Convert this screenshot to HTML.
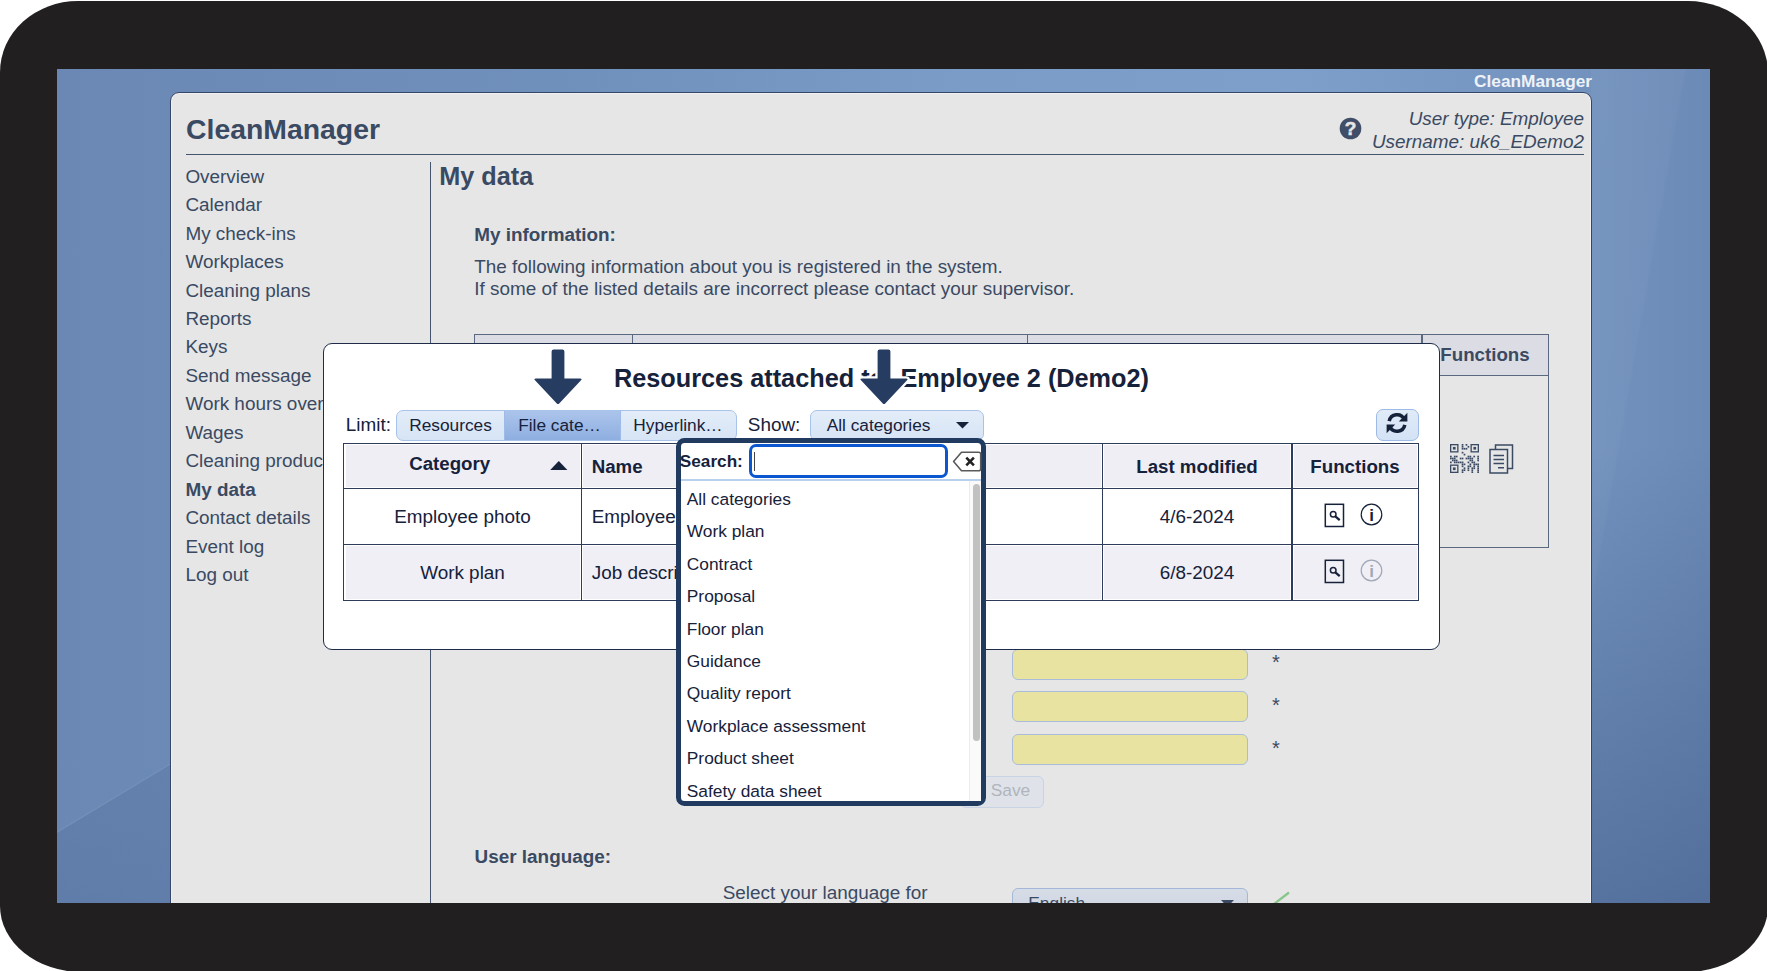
<!DOCTYPE html>
<html><head><meta charset="utf-8"><title>CleanManager</title>
<style>
*{box-sizing:border-box;margin:0;padding:0}
html,body{width:1767px;height:971px;overflow:hidden;background:#fff}
body{font-family:"Liberation Sans",Arial,sans-serif;color:#3a4a63;position:relative}
.abs{position:absolute}
#frame{position:absolute;left:0;top:1px;width:1767.5px;height:970.6px;background:#221f20;border-radius:78px 80px 82px 82px / 71px 72px 66px 66px}
#screen{position:absolute;left:57px;top:69px;width:1653px;height:834px;overflow:hidden;
 background:linear-gradient(90deg,#6b88b4 0%,#7090bc 30%,#7a9cc6 55%,#7d9fca 75%,#7393be 92%,#6c8ab6 100%)}
#wl{position:absolute;left:0;top:620px;width:130px;height:214px;background:linear-gradient(180deg,rgba(60,85,135,.13),rgba(55,80,130,.21));clip-path:polygon(0 143.5px,114px 75px,130px 75px,130px 214px,0 214px)}
#wl2{position:absolute;left:0;top:620px;width:130px;height:214px;background:rgba(255,255,255,.07);clip-path:polygon(0 142.5px,114px 74px,114px 75.3px,0 144.3px)}
#wr{position:absolute;left:1534px;top:0;width:119px;height:834px;background:linear-gradient(180deg,rgba(60,85,135,0) 0%,rgba(60,85,135,0) 45%,rgba(45,68,115,.40) 100%)}
#wr2{position:absolute;left:1534px;top:0;width:119px;height:834px;background:linear-gradient(100deg,rgba(255,255,255,.035) 0%,rgba(255,255,255,.025) 35%,rgba(255,255,255,0) 36%)}
#page{position:absolute;left:-57px;top:-69px;width:1767px;height:971px}
.t{position:absolute;white-space:nowrap;line-height:1}
</style></head><body>
<div id="frame"></div>
<div id="screen"><div id="wl"></div><div id="wl2"></div><div id="wr"></div><div id="wr2"></div><div id="page">
<div class="abs" style="left:169.6px;top:91.5px;width:1422px;height:900px;background:#e6e6e6;border:1.3px solid #34476a;border-radius:9px 9px 0 0;box-shadow:inset 0 0 0 1px rgba(255,255,255,.45)"></div>
<div class="t" style="top:73.09px;font-size:17.26px;right:175px;color:#eef2f8;font-weight:bold">CleanManager</div>
<div class="t" style="top:115.38px;font-size:28.38px;left:186px;font-weight:bold">CleanManager</div>
<div class="abs" style="left:185.6px;top:154px;width:1398.4px;height:1.4px;background:#44546f"></div>
<div class="t" style="top:110.20px;font-size:18.9px;right:183px;font-style:italic">User type: Employee</div>
<div class="t" style="top:132.80px;font-size:18.9px;right:183px;font-style:italic">Username: uk6_EDemo2</div>
<svg class="abs" style="left:1338.6px;top:117.2px" width="23" height="23" viewBox="0 0 23 23"><circle cx="11.5" cy="11.5" r="10.8" fill="#404e67"/><text x="11.5" y="18.4" text-anchor="middle" font-family="Liberation Sans" font-weight="bold" font-size="19" fill="#e6e6e6" stroke="#e6e6e6" stroke-width="0.5">?</text></svg>
<div class="t" style="top:167.70px;font-size:18.9px;left:185.4px;">Overview</div>
<div class="t" style="top:196.16px;font-size:18.9px;left:185.4px;">Calendar</div>
<div class="t" style="top:224.62px;font-size:18.9px;left:185.4px;">My check-ins</div>
<div class="t" style="top:253.08px;font-size:18.9px;left:185.4px;">Workplaces</div>
<div class="t" style="top:281.54px;font-size:18.9px;left:185.4px;">Cleaning plans</div>
<div class="t" style="top:310.00px;font-size:18.9px;left:185.4px;">Reports</div>
<div class="t" style="top:338.46px;font-size:18.9px;left:185.4px;">Keys</div>
<div class="t" style="top:366.92px;font-size:18.9px;left:185.4px;">Send message</div>
<div class="t" style="top:395.38px;font-size:18.9px;left:185.4px;">Work hours overview</div>
<div class="t" style="top:423.84px;font-size:18.9px;left:185.4px;">Wages</div>
<div class="t" style="top:452.30px;font-size:18.9px;left:185.4px;">Cleaning products</div>
<div class="t" style="top:480.76px;font-size:18.9px;left:185.4px;font-weight:bold">My data</div>
<div class="t" style="top:509.22px;font-size:18.9px;left:185.4px;">Contact details</div>
<div class="t" style="top:537.68px;font-size:18.9px;left:185.4px;">Event log</div>
<div class="t" style="top:566.14px;font-size:18.9px;left:185.4px;">Log out</div>
<div class="abs" style="left:429.8px;top:162px;width:1.4px;height:760px;background:#44546f"></div>
<div class="t" style="top:163.63px;font-size:25.25px;left:439.2px;font-weight:bold">My data</div>
<div class="t" style="top:226.30px;font-size:18.9px;left:474.2px;font-weight:bold">My information:</div>
<div class="t" style="top:258.08px;font-size:18.92px;left:474.2px;">The following information about you is registered in the system.</div>
<div class="t" style="top:279.68px;font-size:18.92px;left:474.2px;">If some of the listed details are incorrect please contact your supervisor.</div>
<div class="abs" style="left:473.5px;top:333.5px;width:1075.5px;height:214px;border:1.3px solid #5a6880;background:#e6e6e6"></div>
<div class="abs" style="left:474.5px;top:334.5px;width:1073.5px;height:40.5px;background:#dcdce4"></div>
<div class="abs" style="left:474px;top:374.7px;width:1074px;height:1.3px;background:#5a6880"></div>
<div class="abs" style="left:631.5px;top:334px;width:1.3px;height:41px;background:#5a6880"></div>
<div class="abs" style="left:1026.8px;top:334px;width:1.3px;height:41px;background:#5a6880"></div>
<div class="abs" style="left:1421.3px;top:334px;width:1.3px;height:41px;background:#5a6880"></div>
<div class="abs" style="left:1421.3px;top:375px;width:1.3px;height:172px;background:#5a6880"></div>
<div class="t" style="top:345.77px;font-size:18.7px;left:1085px;width:800px;text-align:center;font-weight:bold">Functions</div>
<svg class="abs" style="left:1449.5px;top:444.3px" width="29.5" height="29" viewBox="0 0 29.5 29"><rect x="0.65" y="0.65" width="7.2" height="7.2" fill="none" stroke="#3a4a63" stroke-width="1.3"/><rect x="2.9" y="2.9" width="2.7" height="2.7" fill="#3a4a63"/><rect x="21.15" y="0.65" width="7.2" height="7.2" fill="none" stroke="#3a4a63" stroke-width="1.3"/><rect x="23.4" y="2.9" width="2.7" height="2.7" fill="#3a4a63"/><rect x="0.65" y="21.15" width="7.2" height="7.2" fill="none" stroke="#3a4a63" stroke-width="1.3"/><rect x="2.9" y="23.4" width="2.7" height="2.7" fill="#3a4a63"/><rect x="0.00" y="11.70" width="1.7" height="1.7" fill="#3a4a63"/><rect x="0.00" y="13.65" width="1.7" height="1.7" fill="#3a4a63"/><rect x="0.00" y="17.55" width="1.7" height="1.7" fill="#3a4a63"/><rect x="1.95" y="13.65" width="1.7" height="1.7" fill="#3a4a63"/><rect x="1.95" y="15.60" width="1.7" height="1.7" fill="#3a4a63"/><rect x="3.90" y="11.70" width="1.7" height="1.7" fill="#3a4a63"/><rect x="3.90" y="13.65" width="1.7" height="1.7" fill="#3a4a63"/><rect x="3.90" y="15.60" width="1.7" height="1.7" fill="#3a4a63"/><rect x="3.90" y="17.55" width="1.7" height="1.7" fill="#3a4a63"/><rect x="5.85" y="11.70" width="1.7" height="1.7" fill="#3a4a63"/><rect x="5.85" y="15.60" width="1.7" height="1.7" fill="#3a4a63"/><rect x="5.85" y="17.55" width="1.7" height="1.7" fill="#3a4a63"/><rect x="7.80" y="17.55" width="1.7" height="1.7" fill="#3a4a63"/><rect x="9.75" y="13.65" width="1.7" height="1.7" fill="#3a4a63"/><rect x="9.75" y="17.55" width="1.7" height="1.7" fill="#3a4a63"/><rect x="11.70" y="0.00" width="1.7" height="1.7" fill="#3a4a63"/><rect x="11.70" y="1.95" width="1.7" height="1.7" fill="#3a4a63"/><rect x="11.70" y="3.90" width="1.7" height="1.7" fill="#3a4a63"/><rect x="11.70" y="7.80" width="1.7" height="1.7" fill="#3a4a63"/><rect x="11.70" y="13.65" width="1.7" height="1.7" fill="#3a4a63"/><rect x="11.70" y="17.55" width="1.7" height="1.7" fill="#3a4a63"/><rect x="11.70" y="19.50" width="1.7" height="1.7" fill="#3a4a63"/><rect x="11.70" y="21.45" width="1.7" height="1.7" fill="#3a4a63"/><rect x="11.70" y="25.35" width="1.7" height="1.7" fill="#3a4a63"/><rect x="11.70" y="27.30" width="1.7" height="1.7" fill="#3a4a63"/><rect x="13.65" y="3.90" width="1.7" height="1.7" fill="#3a4a63"/><rect x="13.65" y="9.75" width="1.7" height="1.7" fill="#3a4a63"/><rect x="13.65" y="19.50" width="1.7" height="1.7" fill="#3a4a63"/><rect x="13.65" y="23.40" width="1.7" height="1.7" fill="#3a4a63"/><rect x="13.65" y="25.35" width="1.7" height="1.7" fill="#3a4a63"/><rect x="15.60" y="0.00" width="1.7" height="1.7" fill="#3a4a63"/><rect x="15.60" y="3.90" width="1.7" height="1.7" fill="#3a4a63"/><rect x="15.60" y="13.65" width="1.7" height="1.7" fill="#3a4a63"/><rect x="17.55" y="1.95" width="1.7" height="1.7" fill="#3a4a63"/><rect x="17.55" y="11.70" width="1.7" height="1.7" fill="#3a4a63"/><rect x="17.55" y="13.65" width="1.7" height="1.7" fill="#3a4a63"/><rect x="17.55" y="17.55" width="1.7" height="1.7" fill="#3a4a63"/><rect x="17.55" y="21.45" width="1.7" height="1.7" fill="#3a4a63"/><rect x="17.55" y="23.40" width="1.7" height="1.7" fill="#3a4a63"/><rect x="17.55" y="25.35" width="1.7" height="1.7" fill="#3a4a63"/><rect x="19.50" y="11.70" width="1.7" height="1.7" fill="#3a4a63"/><rect x="19.50" y="13.65" width="1.7" height="1.7" fill="#3a4a63"/><rect x="19.50" y="15.60" width="1.7" height="1.7" fill="#3a4a63"/><rect x="19.50" y="19.50" width="1.7" height="1.7" fill="#3a4a63"/><rect x="19.50" y="21.45" width="1.7" height="1.7" fill="#3a4a63"/><rect x="21.45" y="13.65" width="1.7" height="1.7" fill="#3a4a63"/><rect x="21.45" y="15.60" width="1.7" height="1.7" fill="#3a4a63"/><rect x="21.45" y="17.55" width="1.7" height="1.7" fill="#3a4a63"/><rect x="21.45" y="23.40" width="1.7" height="1.7" fill="#3a4a63"/><rect x="21.45" y="25.35" width="1.7" height="1.7" fill="#3a4a63"/><rect x="21.45" y="27.30" width="1.7" height="1.7" fill="#3a4a63"/><rect x="23.40" y="11.70" width="1.7" height="1.7" fill="#3a4a63"/><rect x="23.40" y="17.55" width="1.7" height="1.7" fill="#3a4a63"/><rect x="23.40" y="19.50" width="1.7" height="1.7" fill="#3a4a63"/><rect x="23.40" y="21.45" width="1.7" height="1.7" fill="#3a4a63"/><rect x="23.40" y="23.40" width="1.7" height="1.7" fill="#3a4a63"/><rect x="25.35" y="19.50" width="1.7" height="1.7" fill="#3a4a63"/><rect x="27.30" y="11.70" width="1.7" height="1.7" fill="#3a4a63"/><rect x="27.30" y="13.65" width="1.7" height="1.7" fill="#3a4a63"/><rect x="27.30" y="15.60" width="1.7" height="1.7" fill="#3a4a63"/><rect x="27.30" y="19.50" width="1.7" height="1.7" fill="#3a4a63"/><rect x="27.30" y="21.45" width="1.7" height="1.7" fill="#3a4a63"/><rect x="27.30" y="23.40" width="1.7" height="1.7" fill="#3a4a63"/><rect x="27.30" y="25.35" width="1.7" height="1.7" fill="#3a4a63"/><rect x="27.30" y="27.30" width="1.7" height="1.7" fill="#3a4a63"/></svg>
<svg class="abs" style="left:1489px;top:444px" width="25" height="30" viewBox="0 0 25 30" fill="none" stroke="#3a4a63" stroke-width="1.5"><path d="M6.5 5.5V1h17v23.5h-4.5"/><rect x="1" y="5.5" width="17.5" height="23.5" fill="#e6e6e6"/><path d="M4.5 11.5h10.5M4.5 15.5h10.5M4.5 19.5h10.5M9 23.8h6" stroke-width="1.4"/></svg>
<div class="abs" style="left:1012px;top:648.5px;width:236px;height:31.2px;background:#e8e3a0;border:1.3px solid #a9bddb;border-radius:6px"></div>
<div class="abs" style="left:1012px;top:691.3px;width:236px;height:31.2px;background:#e8e3a0;border:1.3px solid #a9bddb;border-radius:6px"></div>
<div class="abs" style="left:1012px;top:733.6px;width:236px;height:31.2px;background:#e8e3a0;border:1.3px solid #a9bddb;border-radius:6px"></div>
<div class="t" style="top:652.37px;font-size:20px;left:876px;width:800px;text-align:center;">*</div>
<div class="t" style="top:695.07px;font-size:20px;left:876px;width:800px;text-align:center;">*</div>
<div class="t" style="top:737.57px;font-size:20px;left:876px;width:800px;text-align:center;">*</div>
<div class="abs" style="left:960px;top:776.4px;width:84px;height:31.4px;background:#dfe3e9;border:1.3px solid #c8d3e4;border-radius:6px"></div>
<div class="t" style="top:782.13px;font-size:17.33px;left:990.7px;color:#b0b5bd">Save</div>
<div class="t" style="top:848.00px;font-size:18.9px;left:474.6px;font-weight:bold">User language:</div>
<div class="t" style="top:883.50px;font-size:18.9px;left:722.7px;">Select your language for</div>
<div class="abs" style="left:1012px;top:887.6px;width:236px;height:32px;background:linear-gradient(#d7dde7,#cbd3e0);border:1.3px solid #a3b8d8;border-radius:6px"></div>
<div class="t" style="top:894.53px;font-size:17.33px;left:1028.3px;">English</div>
<svg class="abs" style="left:1220.5px;top:900px" width="13" height="7" viewBox="0 0 13 7"><path d="M0 0h13L6.5 7z" fill="#3a4a63"/></svg>
<svg class="abs" style="left:1265px;top:888px" width="26" height="24" viewBox="0 0 26 24"><path d="M1 16l3.5 3.5L24 4.5" fill="none" stroke="#88c689" stroke-width="2.3"/></svg>
<div class="abs" style="left:322.7px;top:342.8px;width:1117px;height:307px;background:#fff;border:1.4px solid #1f2d4a;border-radius:9px"></div>
<div class="t" style="top:366.41px;font-size:25.27px;left:481.5px;width:800px;text-align:center;font-weight:bold;color:#16213a">Resources attached to: Employee 2 (Demo2)</div>
<svg class="abs" style="left:532.6px;top:349px" width="50" height="57" viewBox="0 0 50 57" overflow="visible"><path d="M20.6 0.4H29.4Q31.4 0.4 31.4 2.4V29.5H47.2Q49.6 29.5 48 31.3L26.2 54.4Q25 55.7 23.8 54.4L2 31.3Q0.4 29.5 2.8 29.5H18.6V2.4Q18.6 0.4 20.6 0.4Z" fill="#263c60" stroke="#fff" stroke-width="4.6" stroke-linejoin="round" paint-order="stroke"/></svg>
<svg class="abs" style="left:858.55px;top:349px" width="50" height="57" viewBox="0 0 50 57" overflow="visible"><path d="M20.6 0.4H29.4Q31.4 0.4 31.4 2.4V29.5H47.2Q49.6 29.5 48 31.3L26.2 54.4Q25 55.7 23.8 54.4L2 31.3Q0.4 29.5 2.8 29.5H18.6V2.4Q18.6 0.4 20.6 0.4Z" fill="#263c60" stroke="#fff" stroke-width="4.6" stroke-linejoin="round" paint-order="stroke"/></svg>
<div class="t" style="top:416.00px;font-size:18.9px;left:345.8px;color:#16213a">Limit:</div>
<div class="abs" style="left:395.8px;top:409.6px;width:341.2px;height:31px;border:1.3px solid #a7c3ea;border-radius:7px;overflow:hidden;background:linear-gradient(#e4edf9,#d6e4f5)"><div class="abs" style="left:107.4px;top:0;width:116.4px;height:31px;background:linear-gradient(#abc4eb,#8dade0);border-left:1.3px solid #9dbbe6;border-right:1.3px solid #9dbbe6"></div></div>
<div class="t" style="top:416.56px;font-size:17.3px;left:50.5px;width:800px;text-align:center;color:#16213a">Resources</div>
<div class="t" style="top:416.56px;font-size:17.3px;left:159.5px;width:800px;text-align:center;color:#16213a">File cate…</div>
<div class="t" style="top:416.56px;font-size:17.3px;left:278px;width:800px;text-align:center;color:#16213a">Hyperlink…</div>
<div class="t" style="top:416.00px;font-size:18.9px;left:747.8px;color:#16213a">Show:</div>
<div class="abs" style="left:810px;top:409.6px;width:174.2px;height:31px;border:1.3px solid #a7c3ea;border-radius:7px;background:linear-gradient(#e4edf9,#d6e4f5)"></div>
<div class="t" style="top:416.56px;font-size:17.3px;left:826.7px;color:#16213a">All categories</div>
<svg class="abs" style="left:955.5px;top:422.3px" width="13" height="6.5" viewBox="0 0 13 6.5"><path d="M0 0h13L6.5 6.5z" fill="#16213a"/></svg>
<div class="abs" style="left:1376.2px;top:409.3px;width:42.4px;height:31.4px;border:1.3px solid #9dbbe6;border-radius:7px;background:linear-gradient(#e1ebf8,#d3e2f5)"></div>
<svg class="abs" style="left:1384.6px;top:410.5px" width="24" height="24" viewBox="0 0 24 24" fill="none" stroke="#16213a" stroke-width="3.5"><path d="M19.3 8.4A8 8 0 0 0 4.2 10.2"/><path d="M4.7 15.6A8 8 0 0 0 19.8 13.8"/><path d="M22.4 1.8v8.6h-8.6z" fill="#16213a" stroke="none"/><path d="M1.6 22.2v-8.6h8.6z" fill="#16213a" stroke="none"/></svg>
<div class="abs" style="left:343.4px;top:443px;width:1076px;height:158px;background:#fff"></div>
<div class="abs" style="left:345.6px;top:445.2px;width:234.5px;height:41.69999999999999px;background:#efeef5"></div>
<div class="abs" style="left:583.1px;top:445.2px;width:517.6999999999999px;height:41.69999999999999px;background:#efeef5"></div>
<div class="abs" style="left:1103.8px;top:445.2px;width:186.70000000000005px;height:41.69999999999999px;background:#efeef5"></div>
<div class="abs" style="left:1293.5px;top:445.2px;width:123.70000000000005px;height:41.69999999999999px;background:#efeef5"></div>
<div class="abs" style="left:345.6px;top:545.9px;width:234.5px;height:52.89999999999998px;background:#f0eff6"></div>
<div class="abs" style="left:583.1px;top:545.9px;width:517.6999999999999px;height:52.89999999999998px;background:#f0eff6"></div>
<div class="abs" style="left:1103.8px;top:545.9px;width:186.70000000000005px;height:52.89999999999998px;background:#f0eff6"></div>
<div class="abs" style="left:1293.5px;top:545.9px;width:123.70000000000005px;height:52.89999999999998px;background:#f0eff6"></div>
<div class="abs" style="left:344px;top:487.7px;width:1074.5px;height:1.4px;background:#2c3c5a"></div>
<div class="abs" style="left:344px;top:543.7px;width:1074.5px;height:1.4px;background:#2c3c5a"></div>
<div class="abs" style="left:580.9px;top:443px;width:1.4px;height:157.5px;background:#2c3c5a"></div>
<div class="abs" style="left:1101.6px;top:443px;width:1.4px;height:157.5px;background:#2c3c5a"></div>
<div class="abs" style="left:1291.3px;top:443px;width:1.4px;height:157.5px;background:#2c3c5a"></div>
<div class="abs" style="left:343.4px;top:443px;width:1076px;height:158px;border:1.4px solid #2c3c5a"></div>
<div class="t" style="top:455.27px;font-size:18.7px;left:49.69999999999999px;width:800px;text-align:center;font-weight:bold;color:#16213a">Category</div>
<svg class="abs" style="left:548.8px;top:460.6px" width="19.6" height="9.6" viewBox="0 0 21 11"><path d="M0 11h21L10.5 0z" fill="#16213a"/></svg>
<div class="t" style="top:457.67px;font-size:18.7px;left:591.7px;font-weight:bold;color:#16213a">Name</div>
<div class="t" style="top:457.67px;font-size:18.7px;left:797px;width:800px;text-align:center;font-weight:bold;color:#16213a">Last modified</div>
<div class="t" style="top:457.67px;font-size:18.7px;left:955px;width:800px;text-align:center;font-weight:bold;color:#16213a">Functions</div>
<div class="t" style="top:507.50px;font-size:18.9px;left:62.5px;width:800px;text-align:center;color:#16213a">Employee photo</div>
<div class="t" style="top:507.50px;font-size:18.9px;left:591.7px;color:#16213a">Employee</div>
<div class="t" style="top:507.50px;font-size:18.9px;left:797px;width:800px;text-align:center;color:#16213a">4/6-2024</div>
<div class="t" style="top:563.90px;font-size:18.9px;left:62.5px;width:800px;text-align:center;color:#16213a">Work plan</div>
<div class="t" style="top:563.90px;font-size:18.9px;left:591.7px;color:#16213a">Job description</div>
<div class="t" style="top:563.90px;font-size:18.9px;left:797px;width:800px;text-align:center;color:#16213a">6/8-2024</div>
<svg class="abs" style="left:1324px;top:503px" width="21" height="25" viewBox="0 0 21 25" fill="none" stroke="#16213a"><rect x="1.3" y="1.3" width="18.2" height="22.2" stroke-width="1.5"/><circle cx="9.2" cy="11.2" r="2.8" stroke-width="1.5"/><path d="M11.3 13.4l4.4 3.8" stroke-width="2.3"/></svg>
<svg class="abs" style="left:1359.5px;top:502.5px" width="23" height="23" viewBox="0 0 23 23"><circle cx="11.5" cy="11.5" r="10.3" fill="none" stroke="#16213a" stroke-width="1.2"/><text x="11.5" y="17.6" text-anchor="middle" font-family="Liberation Sans" font-weight="bold" font-size="17" fill="#16213a">i</text></svg>
<svg class="abs" style="left:1324px;top:559px" width="21" height="25" viewBox="0 0 21 25" fill="none" stroke="#16213a"><rect x="1.3" y="1.3" width="18.2" height="22.2" stroke-width="1.5"/><circle cx="9.2" cy="11.2" r="2.8" stroke-width="1.5"/><path d="M11.3 13.4l4.4 3.8" stroke-width="2.3"/></svg>
<svg class="abs" style="left:1359.5px;top:558.5px" width="23" height="23" viewBox="0 0 23 23"><circle cx="11.5" cy="11.5" r="10.3" fill="none" stroke="#a0a8b7" stroke-width="1.2"/><text x="11.5" y="17.6" text-anchor="middle" font-family="Liberation Sans" font-weight="bold" font-size="17" fill="#a0a8b7">i</text></svg>
<div class="abs" style="left:676.2px;top:438.3px;width:309.8px;height:367.5px;background:#fff;border:5px solid #213a60;border-radius:8.5px"></div>
<div class="abs" style="left:681px;top:479.3px;width:299.8px;height:1.3px;background:#b9d0ef"></div>
<div class="t" style="top:452.74px;font-size:17.2px;left:679.8px;font-weight:bold;color:#16213a">Search:</div>
<div class="abs" style="left:748.8px;top:444.4px;width:199.2px;height:33.2px;border:3px solid #0b57d0;border-radius:7px;background:#fff"></div>
<div class="abs" style="left:754px;top:452px;width:1.1px;height:19px;background:#444"></div>
<svg class="abs" style="left:952px;top:450.5px" width="30" height="21" viewBox="0 0 30 21"><path d="M9.5 1.3h17.2a2 2 0 0 1 2 2v14.4a2 2 0 0 1-2 2H9.5L1.6 10.5z" fill="#fff" stroke="#5a5a5a" stroke-width="1.6" stroke-linejoin="round"/><path d="M14.3 6.7l7.6 7.6M21.9 6.7l-7.6 7.6" stroke="#222" stroke-width="2.6"/></svg>
<div class="t" style="top:490.93px;font-size:17.33px;left:686.8px;color:#16213a">All categories</div>
<div class="t" style="top:523.35px;font-size:17.33px;left:686.8px;color:#16213a">Work plan</div>
<div class="t" style="top:555.77px;font-size:17.33px;left:686.8px;color:#16213a">Contract</div>
<div class="t" style="top:588.19px;font-size:17.33px;left:686.8px;color:#16213a">Proposal</div>
<div class="t" style="top:620.61px;font-size:17.33px;left:686.8px;color:#16213a">Floor plan</div>
<div class="t" style="top:653.03px;font-size:17.33px;left:686.8px;color:#16213a">Guidance</div>
<div class="t" style="top:685.45px;font-size:17.33px;left:686.8px;color:#16213a">Quality report</div>
<div class="t" style="top:717.87px;font-size:17.33px;left:686.8px;color:#16213a">Workplace assessment</div>
<div class="t" style="top:750.29px;font-size:17.33px;left:686.8px;color:#16213a">Product sheet</div>
<div class="t" style="top:782.71px;font-size:17.33px;left:686.8px;color:#16213a">Safety data sheet</div>
<div class="abs" style="left:969px;top:481px;width:12px;height:320px;background:#fafafa;border-left:1px solid #ececec"></div>
<div class="abs" style="left:972.9px;top:483.5px;width:7.1px;height:257px;background:#c1c1c1;border-radius:3.5px"></div>
</div></div>
</body></html>
